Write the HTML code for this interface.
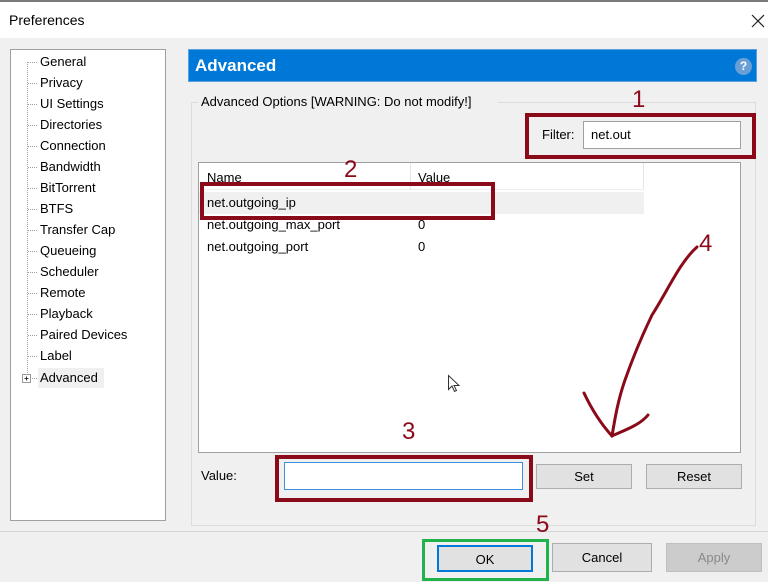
<!DOCTYPE html>
<html><head><meta charset="utf-8"><style>
*{margin:0;padding:0;box-sizing:border-box}
body{width:768px;height:582px;background:#f0f0f0;font-family:"Liberation Sans",sans-serif;font-size:13px;color:#000;position:relative;overflow:hidden}
.a{position:absolute}
.t{position:absolute;white-space:nowrap;line-height:14px}
.btn{position:absolute;background:#e1e1e1;border:1px solid #adadad;text-align:center;font-size:13px}
.red{position:absolute;border:4px solid #8b0a1a}
.num{position:absolute;color:#8b0a1a;font-size:24px;line-height:24px}
</style></head><body>
<div class="a" style="left:0;top:0;width:768px;height:38px;background:#fff;border-top:2px solid #7a7a7a"></div>
<div class="t" style="left:9px;top:13px;font-size:14px">Preferences</div>
<svg class="a" style="left:750px;top:13px" width="16" height="16"><path d="M2 2L14 14M14 2L2 14" stroke="#222" stroke-width="1.2"/></svg>

<div class="a" style="left:10px;top:49px;width:156px;height:472px;background:#fff;border:1px solid #a0a0a0"></div>
<div class="t" style="left:40px;top:55px">General</div>
<div class="t" style="left:40px;top:76px">Privacy</div>
<div class="t" style="left:40px;top:97px">UI Settings</div>
<div class="t" style="left:40px;top:118px">Directories</div>
<div class="t" style="left:40px;top:139px">Connection</div>
<div class="t" style="left:40px;top:160px">Bandwidth</div>
<div class="t" style="left:40px;top:181px">BitTorrent</div>
<div class="t" style="left:40px;top:202px">BTFS</div>
<div class="t" style="left:40px;top:223px">Transfer Cap</div>
<div class="t" style="left:40px;top:244px">Queueing</div>
<div class="t" style="left:40px;top:265px">Scheduler</div>
<div class="t" style="left:40px;top:286px">Remote</div>
<div class="t" style="left:40px;top:307px">Playback</div>
<div class="t" style="left:40px;top:328px">Paired Devices</div>
<div class="t" style="left:40px;top:349px">Label</div>
<div class="a" style="left:38px;top:368px;width:66px;height:20px;background:#f0f0f0"></div>
<div class="t" style="left:40px;top:371px">Advanced</div>
<svg class="a" style="left:0;top:0" width="40" height="390">
<g stroke="#a0a0a0" stroke-dasharray="1 1">
<line x1="27.5" y1="62" x2="27.5" y2="374"/>
<line x1="28" y1="62.5" x2="37" y2="62.5"/><line x1="28" y1="83.5" x2="37" y2="83.5"/><line x1="28" y1="104.5" x2="37" y2="104.5"/><line x1="28" y1="125.5" x2="37" y2="125.5"/><line x1="28" y1="146.5" x2="37" y2="146.5"/><line x1="28" y1="167.5" x2="37" y2="167.5"/><line x1="28" y1="188.5" x2="37" y2="188.5"/><line x1="28" y1="209.5" x2="37" y2="209.5"/><line x1="28" y1="230.5" x2="37" y2="230.5"/><line x1="28" y1="251.5" x2="37" y2="251.5"/><line x1="28" y1="272.5" x2="37" y2="272.5"/><line x1="28" y1="293.5" x2="37" y2="293.5"/><line x1="28" y1="314.5" x2="37" y2="314.5"/><line x1="28" y1="335.5" x2="37" y2="335.5"/><line x1="28" y1="356.5" x2="37" y2="356.5"/><line x1="32" y1="378.5" x2="37" y2="378.5"/>
</g>
<rect x="22.5" y="374.5" width="8" height="8" fill="#fff" stroke="#999"/>
<path d="M24.5 378.5h4M26.5 376.5v4" stroke="#333"/>
</svg>

<div class="a" style="left:188px;top:49px;width:569px;height:33px;background:#0078d7;border:1px solid #5aa0e0"></div>
<div class="t" style="left:195px;top:57px;color:#fff;font-weight:bold;font-size:17px;line-height:18px">Advanced</div>
<div class="a" style="left:735px;top:58px;width:17px;height:17px;border-radius:50%;background:#6a9fd6;color:#fff;font-size:12px;font-weight:bold;text-align:center;line-height:17px">?</div>

<div class="a" style="left:191px;top:102px;width:565px;height:424px;border:1px solid #dcdcdc"></div>
<div class="a" style="left:198px;top:95px;width:300px;height:14px;background:#f0f0f0"></div>
<div class="t" style="left:201px;top:95px">Advanced Options [WARNING: Do not modify!]</div>

<div class="t" style="left:542px;top:128px">Filter:</div>
<div class="a" style="left:583px;top:121px;width:158px;height:28px;background:#fff;border:1px solid #a0a0a0"></div>
<div class="t" style="left:591px;top:128px">net.out</div>
<div class="red" style="left:525px;top:113px;width:231px;height:46px"></div>
<div class="num" style="left:632px;top:88px">1</div>

<div class="a" style="left:198px;top:162px;width:543px;height:291px;background:#fff;border:1px solid #a0a0a0"></div>
<div class="a" style="left:410px;top:163px;width:1px;height:26px;background:#e5e5e5"></div>
<div class="a" style="left:199px;top:189px;width:445px;height:1px;background:#eee"></div>
<div class="a" style="left:643px;top:163px;width:1px;height:26px;background:#e5e5e5"></div>
<div class="t" style="left:207px;top:171px">Name</div>
<div class="t" style="left:418px;top:171px">Value</div>
<div class="a" style="left:199px;top:192px;width:445px;height:22px;background:#f0f0f0"></div>
<div class="t" style="left:207px;top:196px">net.outgoing_ip</div>
<div class="t" style="left:207px;top:218px">net.outgoing_max_port</div>
<div class="t" style="left:418px;top:218px">0</div>
<div class="t" style="left:207px;top:240px">net.outgoing_port</div>
<div class="t" style="left:418px;top:240px">0</div>
<div class="red" style="left:200px;top:182px;width:295px;height:38px"></div>
<div class="num" style="left:344px;top:158px">2</div>
<svg class="a" style="left:447px;top:374px" width="14" height="20"><path d="M1.5 1.5v14l3.5-3.5 2.5 5.5 2-1-2.5-5h5z" fill="#fff" stroke="#333"/></svg>

<svg class="a" style="left:0;top:0" width="768" height="582">
<path d="M697 247 C680 262 668 290 652 315 C640 340 632 360 625 380 C618 400 615 418 612 436" fill="none" stroke="#8b0a1a" stroke-width="3" stroke-linecap="round"/>
<path d="M584 393 C592 410 602 425 612 436 C625 430 640 425 648 415" fill="none" stroke="#8b0a1a" stroke-width="3" stroke-linecap="round"/>
</svg>
<div class="num" style="left:699px;top:232px">4</div>

<div class="t" style="left:201px;top:469px">Value:</div>
<div class="a" style="left:284px;top:462px;width:239px;height:28px;background:#fff;border:1px solid #3c8fe0"></div>
<div class="red" style="left:275px;top:455px;width:258px;height:47px"></div>
<div class="num" style="left:402px;top:420px">3</div>
<div class="btn" style="left:536px;top:464px;width:96px;height:25px;line-height:23px">Set</div>
<div class="btn" style="left:646px;top:464px;width:96px;height:25px;line-height:23px">Reset</div>

<div class="a" style="left:0;top:531px;width:768px;height:1px;background:#d5d5d5"></div>
<div class="a" style="left:0;top:532px;width:768px;height:50px;background:#f0f0f0"></div>
<div class="num" style="left:536px;top:513px">5</div>
<div class="btn" style="left:437px;top:545px;width:96px;height:27px;line-height:25px;border:2px solid #0078d7">OK</div>
<div class="a" style="left:422px;top:539px;width:127px;height:42px;border:3px solid #22b14c"></div>
<div class="btn" style="left:552px;top:543px;width:100px;height:29px;line-height:27px">Cancel</div>
<div class="btn" style="left:666px;top:543px;width:96px;height:29px;line-height:27px;background:#ccc;border-color:#bfbfbf;color:#8a8a8a">Apply</div>
</body></html>
